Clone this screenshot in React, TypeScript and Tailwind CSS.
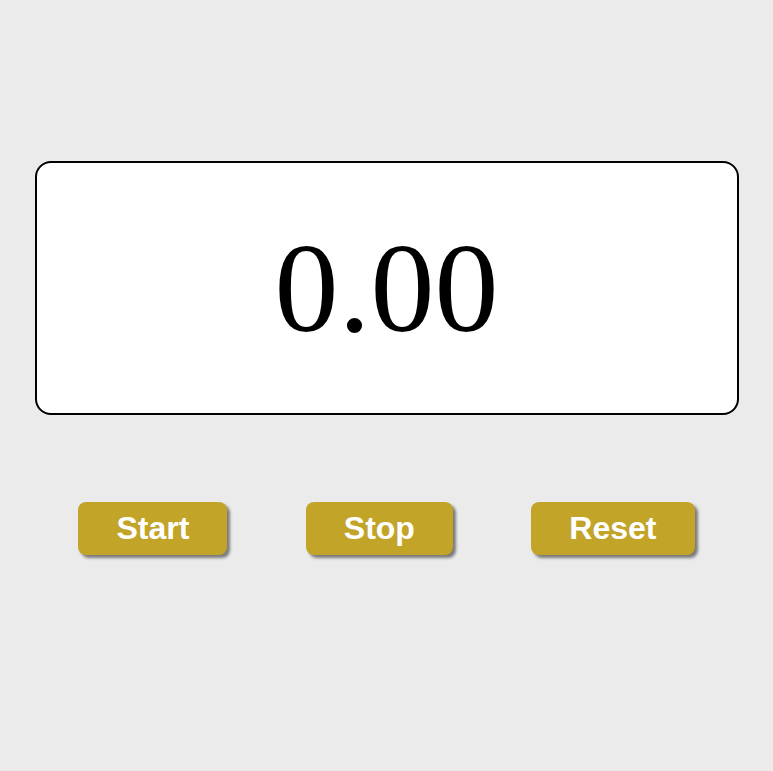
export default function App() {
  return (
    <div className="min-h-[771px] w-full bg-[#ebebeb] pt-[161px]">
      <div className="mx-auto flex h-[254px] w-[704px] items-center justify-center rounded-2xl border-2 border-black bg-white">
        <span className="font-['Liberation_Serif',serif] text-[128px] leading-none text-black">
          0.00
        </span>
      </div>
      <div className="mt-[87px] flex justify-evenly font-['Liberation_Sans',Arial,sans-serif]">
        <button className="rounded-lg bg-[#c1a428] px-[38px] py-2 text-[32px] leading-[37px] font-bold text-white shadow-[3px_3px_3px_#7a7a7a]">
          Start
        </button>
        <button className="rounded-lg bg-[#c1a428] px-[38px] py-2 text-[32px] leading-[37px] font-bold text-white shadow-[3px_3px_3px_#7a7a7a]">
          Stop
        </button>
        <button className="rounded-lg bg-[#c1a428] px-[38px] py-2 text-[32px] leading-[37px] font-bold text-white shadow-[3px_3px_3px_#7a7a7a]">
          Reset
        </button>
      </div>
    </div>
  );
}
